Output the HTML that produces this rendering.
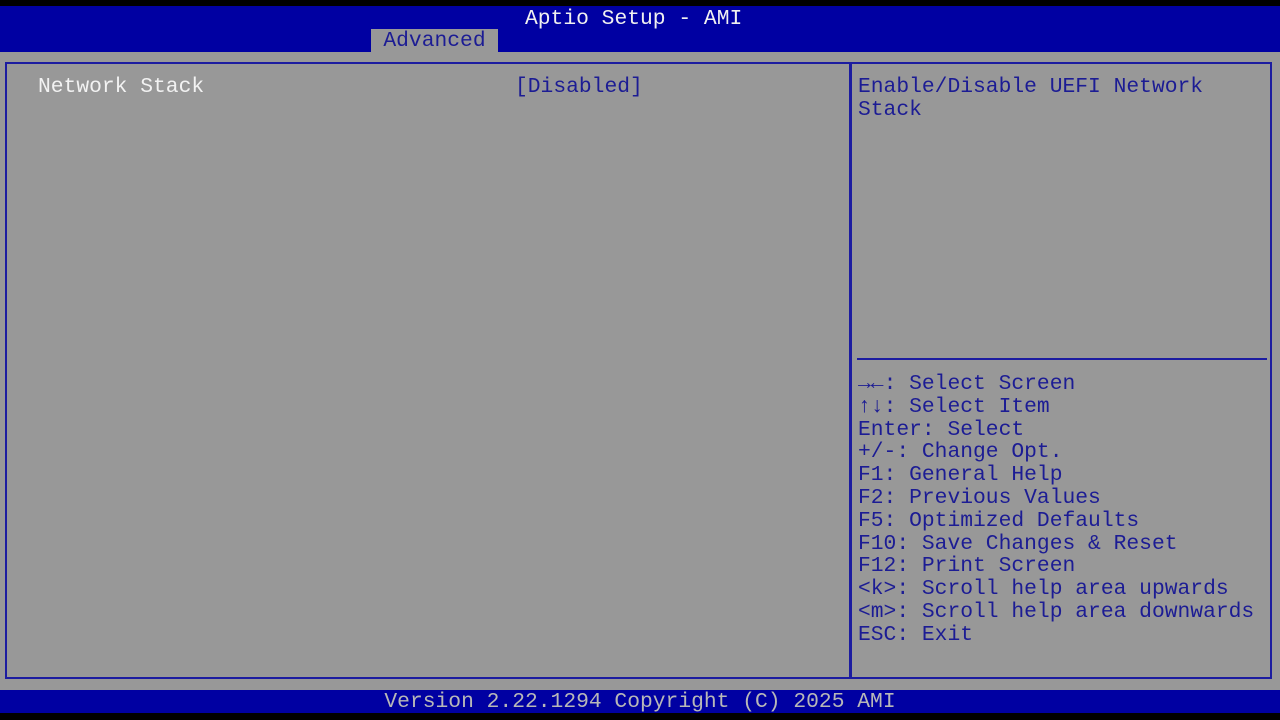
<!DOCTYPE html>
<html><head><style>
body{margin:0;width:1280px;height:720px;background:#000;position:relative;overflow:hidden;font-family:"Liberation Mono",monospace;font-size:21.3px;}
div{position:absolute;white-space:pre;}
.t{line-height:22.8px;color:#1c1c94;}
</style></head><body>
<div style="left:0;top:6px;width:1280px;height:46px;background:#0000a2"></div>
<div style="left:0;top:52px;width:1280px;height:638px;background:#989898"></div>
<div style="left:525px;top:7px;color:#f0f0f0;line-height:24px">Aptio Setup - AMI</div>
<div style="left:371px;top:29px;width:127px;height:23px;background:#989898;color:#1c1c94;text-align:center;line-height:25px">Advanced</div>
<div style="left:5px;top:62px;width:1263px;height:613px;border:2px solid #1c1ca0"></div>
<div style="left:849px;top:62px;width:3px;height:617px;background:#1c1ca0"></div>
<div style="left:857px;top:358px;width:410px;height:2px;background:#1c1ca0"></div>
<div class="t" style="left:38px;top:76px;color:#f2f2f2">Network Stack</div>
<div class="t" style="left:515px;top:76px">[Disabled]</div>
<div class="t" style="left:858px;top:76px">Enable/Disable UEFI Network
Stack</div>
<div class="t" style="left:858px;top:373px"><b>→←</b>: Select Screen
<b>↑↓</b>: Select Item
Enter: Select
+/-: Change Opt.
F1: General Help
F2: Previous Values
F5: Optimized Defaults
F10: Save Changes &amp; Reset
F12: Print Screen
&lt;k&gt;: Scroll help area upwards
&lt;m&gt;: Scroll help area downwards
ESC: Exit</div>
<div style="left:0;top:690px;width:1280px;height:23px;background:#0000a2;color:#b8b8b8;text-align:center;line-height:25px">Version 2.22.1294 Copyright (C) 2025 AMI</div>
</body></html>
